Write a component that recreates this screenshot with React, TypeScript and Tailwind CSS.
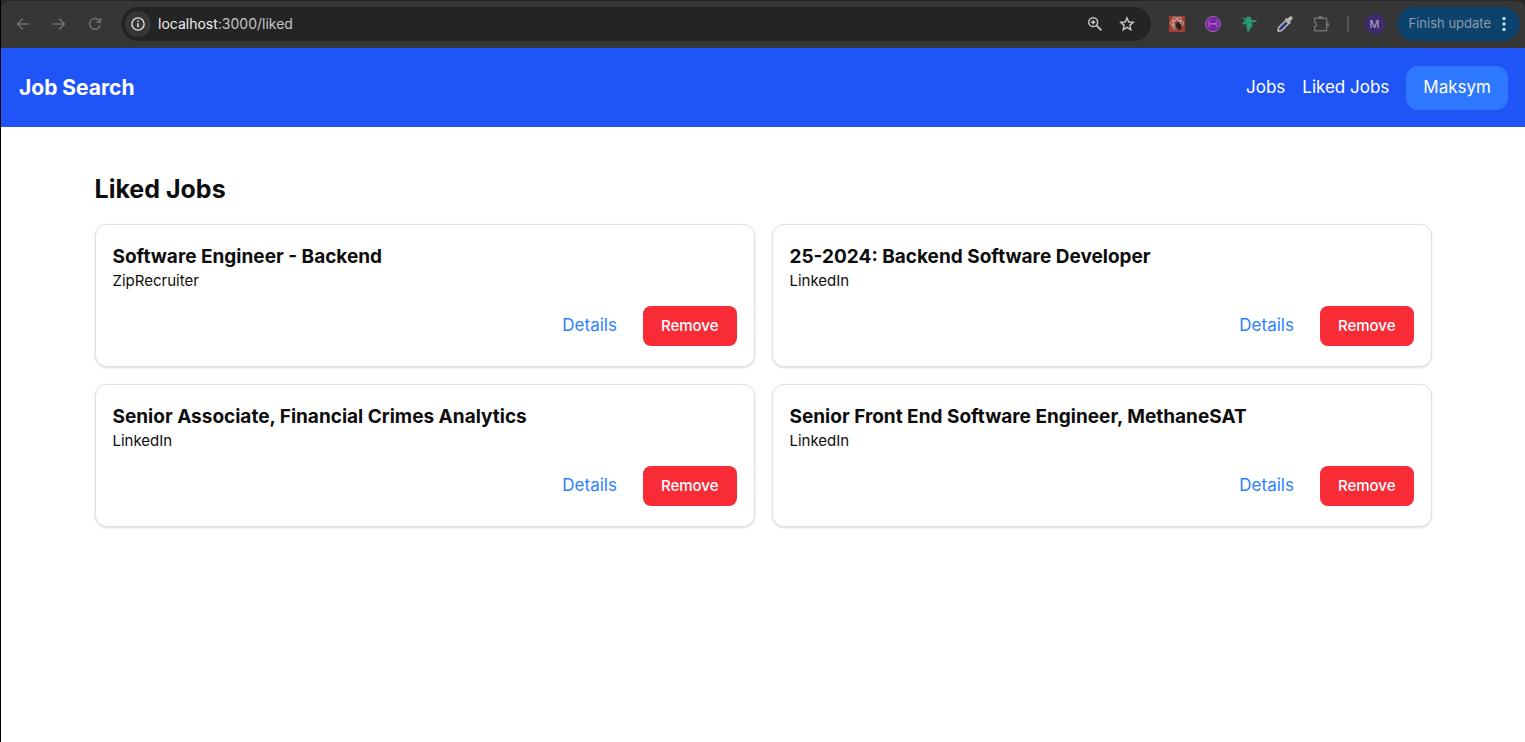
import React from "react";

type Job = { id: number; title: string; source: string };

const jobs: Job[] = [
  { id: 1, title: "Software Engineer - Backend", source: "ZipRecruiter" },
  { id: 2, title: "25-2024: Backend Software Developer", source: "LinkedIn" },
  { id: 3, title: "Senior Associate, Financial Crimes Analytics", source: "LinkedIn" },
  { id: 4, title: "Senior Front End Software Engineer, MethaneSAT", source: "LinkedIn" },
];

const iconButton = "flex size-5 shrink-0 items-center justify-center";

function BrowserBar() {
  return (
    <div className="h-12 border-t border-[#28282a] bg-[#28282a]">
      <div className="flex h-full items-center rounded-t-lg bg-[#363636] pr-[5px] pb-px">
        <div className="flex items-center gap-4 pl-3 text-[#6f6f6f]">
          <button type="button" aria-label="Back" className={iconButton}>
            <svg className="size-4" viewBox="0 0 16 16" fill="none" stroke="currentColor" strokeWidth="1.5">
              <path d="M14 8H2.8M8 2.5 2.5 8 8 13.5" />
            </svg>
          </button>
          <button type="button" aria-label="Forward" className={iconButton}>
            <svg className="size-4" viewBox="0 0 16 16" fill="none" stroke="currentColor" strokeWidth="1.5">
              <path d="M2 8h11.2M8 2.5 13.5 8 8 13.5" />
            </svg>
          </button>
          <button type="button" aria-label="Reload" className={iconButton}>
            <svg className="size-4" viewBox="0 0 16 16" fill="none" stroke="currentColor" strokeWidth="1.5">
              <path d="M13.2 9.2A5.4 5.4 0 1 1 12 4.3L13.4 6M13.5 2v4.3H9.2" />
            </svg>
          </button>
        </div>

        <div className="ml-4 flex h-[34px] min-w-0 flex-1 items-center rounded-full bg-[#242424] pr-4 pl-1">
          <button
            type="button"
            aria-label="View site information"
            className="flex size-[26px] shrink-0 items-center justify-center rounded-full bg-[#363636] text-[#dedede]"
          >
            <svg className="size-4" viewBox="0 0 16 16" fill="none" stroke="currentColor" strokeWidth="1.4">
              <circle cx="8" cy="8" r="6.1" />
              <path d="M8 7.2v4M8 4.6v1.5" strokeWidth="1.6" />
            </svg>
          </button>
          <div className="ml-[7px] flex-1 truncate text-sm text-[#c4c4c4]">
            <span className="text-[#ececec]">localhost</span>:3000/liked
          </div>
          <div className="flex items-center gap-4 text-[#c7c7c7]">
            <button type="button" aria-label="Zoom" className="flex size-4 items-center justify-center">
              <svg className="size-4" viewBox="0 0 16 16" fill="none" stroke="currentColor" strokeWidth="1.5">
                <circle cx="6.2" cy="6.2" r="4.4" />
                <path d="m9.4 9.4 5 5" strokeWidth="1.8" />
                <path d="M6.2 4.2v4M4.2 6.2h4" />
              </svg>
            </button>
            <button type="button" aria-label="Bookmark this tab" className="flex size-4 items-center justify-center">
              <svg className="size-4" viewBox="0 0 16 16" fill="none" stroke="currentColor" strokeWidth="1.4">
                <path d="m8 1.9 1.75 4.1 4.5.4-3.4 2.95 1 4.35L8 11.4l-3.85 2.3 1-4.35-3.4-2.95 4.5-.4Z" />
              </svg>
            </button>
          </div>
        </div>

        <div className="flex items-center gap-4 pl-4 text-[#707070]">
          <button type="button" aria-label="React tools" className={iconButton}>
            <svg className="size-4" viewBox="0 0 16 16" fill="none">
              <rect width="16" height="16" fill="#a23b30" />
              <g stroke="#b9a5a1" strokeWidth="1.1">
                <ellipse cx="8" cy="7.2" rx="6.5" ry="3.2" />
                <ellipse cx="8" cy="7.2" rx="6.5" ry="3.2" transform="rotate(60 8 7.2)" />
                <ellipse cx="8" cy="7.2" rx="6.5" ry="3.2" transform="rotate(120 8 7.2)" />
              </g>
              <ellipse cx="9.8" cy="10.4" rx="2.6" ry="3.6" transform="rotate(-20 9.8 10.4)" fill="#27201f" />
              <path d="m6 9.5 7 1.6M6.4 12.8l6.1-4.3M7.8 6.2l1.2 2 2-1.6" stroke="#27201f" />
            </svg>
          </button>
          <button type="button" aria-label="Network tools" className={iconButton}>
            <svg className="size-4" viewBox="0 0 16 16" fill="none">
              <circle cx="8" cy="8" r="7.6" fill="#7a22a4" stroke="#a77abc" strokeWidth=".8" />
              <path
                d="M5.2 4.2c-1.5 0-.7 2.8-2 3.6 1.3.8.5 3.6 2 3.6M10.8 4.2c1.5 0 .7 2.8 2 3.6-1.3.8-.5 3.6-2 3.6"
                stroke="#b06bd0"
              />
              <path d="M5 7.3h1.3v1.3H5zM7.4 7.3h1.3v1.3H7.4zM9.8 7.3h1.3v1.3H9.8z" fill="#d9bde4" />
            </svg>
          </button>
          <button type="button" aria-label="Gremlin tools" className={iconButton}>
            <svg className="size-4" viewBox="0 0 16 16" fill="#299873">
              <path d="m.8 1 4.2 1.6L6.4.4l3.2.4.8 2.6 1.4 1 3.6-.6.2 1.6-3.8 1-1.2-.4.8 3.4-.8 2-1.8 1.2-.4 2.8-2.6.2.6-2.6-1.2-2L5.4 9.6l-.2-2-2.6 1.2L1.4 7.2l2.8-2.4Z" />
            </svg>
          </button>
          <button type="button" aria-label="Color picker" className={iconButton}>
            <svg className="size-4" viewBox="0 0 16 16" fill="none">
              <path d="m8.7 4.5 3 3-7 7-3.3.6-.5-.5.8-3.1Z" fill="#293d84" stroke="#b8b8b8" strokeWidth="1.5" />
              <path
                d="m8 2.9 1.3-1.2 1.2 1.1L12.8.5q1.5-.8 2.5.4.8 1.2-.1 2.3l-2.3 2.3 1.1 1.3L12.7 8Z"
                fill="#b8b8b8"
              />
            </svg>
          </button>
          <button type="button" aria-label="Extensions" className={iconButton}>
            <svg className="size-[18px]" viewBox="0 0 18 18" fill="none" stroke="currentColor" strokeWidth="1.4">
              <path d="M2.6 3.2h12v12.6h-12v-4c2.4-.3 2.4-4.1 0-4.4Z" strokeLinejoin="round" />
              <path d="M7 2.9a1.6 1.6 0 0 1 3.2 0ZM14.9 7.9a1.6 1.6 0 0 1 0 3.2Z" fill="currentColor" />
            </svg>
          </button>
        </div>
        <div className="ml-4 h-4 w-0.5 bg-[#555]" />
        <button
          type="button"
          aria-label="Profile"
          className="ml-4 flex size-5 shrink-0 items-center justify-center rounded-full bg-[#3f2b74] text-[11px] text-[#b1a9c4]"
        >
          M
        </button>
        <button
          type="button"
          className="ml-3 flex h-[34px] shrink-0 items-center gap-[11px] rounded-full bg-[#0d426d] pr-[14px] pl-3 text-[13px] text-[#879baa]"
        >
          Finish update
          <svg className="h-4 w-1" viewBox="0 0 4 16" fill="#b8def2">
            <circle cx="2" cy="2.5" r="1.7" />
            <circle cx="2" cy="8" r="1.7" />
            <circle cx="2" cy="13.5" r="1.7" />
          </svg>
        </button>
      </div>
    </div>
  );
}

function JobCard({ job }: { job: Job }) {
  return (
    <article className="rounded-xl border border-[#dedfe1] bg-white px-[17px] pt-[18px] pb-5 shadow-sm">
      <h2 className="text-[19px] leading-[27px] font-bold">{job.title}</h2>
      <p className="text-[15px] leading-[22px]">{job.source}</p>
      <div className="mt-[14px] flex items-center justify-end gap-[26px]">
        <a href="#details" className="text-[17px] text-[#2b7fff]">
          Details
        </a>
        <button type="button" className="h-10 rounded-lg bg-[#f72c37] px-[18px] text-[15px] font-medium text-white">
          Remove
        </button>
      </div>
    </article>
  );
}

export default function App() {
  return (
    <div className="min-h-screen border-l border-black bg-white font-['Inter',sans-serif] text-[#0d0d0d]">
      <BrowserBar />
      <header className="flex items-center justify-between bg-[#1f55f7] pt-[18px] pr-[17px] pb-[17px] pl-[18px] text-white">
        <a href="#home" className="text-[21px] font-bold">
          Job Search
        </a>
        <nav className="flex items-center gap-[17px] text-[17px]">
          <a href="#jobs">Jobs</a>
          <a href="#liked">Liked Jobs</a>
          <button type="button" className="h-11 rounded-xl bg-[#2e77ff] px-[17px]">
            Maksym
          </button>
        </nav>
      </header>
      <main className="mx-auto max-w-[1373px] px-[18px] pt-11">
        <h1 className="mb-[17px] text-[25px] leading-9 font-bold">Liked Jobs</h1>
        <div className="grid grid-cols-2 gap-[17px]">
          {jobs.map((job) => (
            <JobCard key={job.id} job={job} />
          ))}
        </div>
      </main>
    </div>
  );
}
